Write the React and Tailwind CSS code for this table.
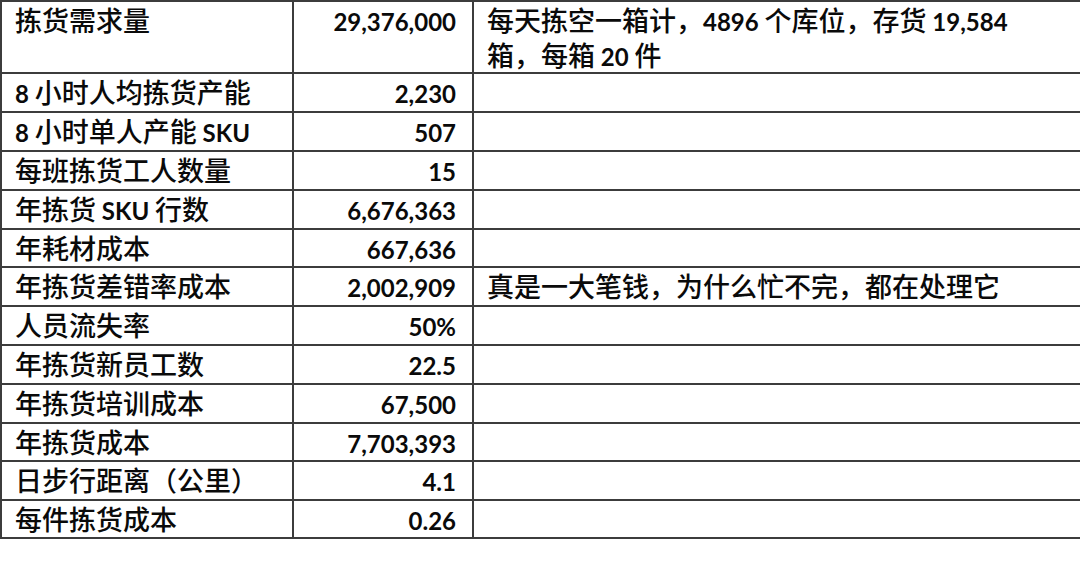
import React from "react";

const rows = [
  { a: "拣货需求量", b: "29,376,000", c: ["每天拣空一箱计，4896 个库位，存货 19,584", "箱，每箱 20 件"], h: "h-[72px]" },
  { a: "8 小时人均拣货产能", b: "2,230", h: "h-[39px]" },
  { a: "8 小时单人产能 SKU", b: "507", h: "h-[39px]" },
  { a: "每班拣货工人数量", b: "15", h: "h-[39px]" },
  { a: "年拣货 SKU 行数", b: "6,676,363", h: "h-[39px]" },
  { a: "年耗材成本", b: "667,636", h: "h-[38px]" },
  { a: "年拣货差错率成本", b: "2,002,909", c: ["真是一大笔钱，为什么忙不完，都在处理它"], h: "h-[39px]" },
  { a: "人员流失率", b: "50%", h: "h-[39px]" },
  { a: "年拣货新员工数", b: "22.5", h: "h-[39px]" },
  { a: "年拣货培训成本", b: "67,500", h: "h-[39px]" },
  { a: "年拣货成本", b: "7,703,393", h: "h-[38px]" },
  { a: "日步行距离（公里）", b: "4.1", h: "h-[39px]" },
  { a: "每件拣货成本", b: "0.26", h: "h-[38px]" },
];

function T({ s }) {
  const parts = s.split(/([\u0020-\u007e]+)/).filter((p) => p.length > 0);
  return (
    <>
      {parts.map((p, i) =>
        /^[\u0020-\u007e]+$/.test(p) ? (
          <span
            key={i}
            className="font-bold text-[24px] leading-none [font-family:Lato,'Liberation_Sans',sans-serif]"
          >
            {p}
          </span>
        ) : (
          <span key={i} className="leading-none font-medium">
            {p}
          </span>
        )
      )}
    </>
  );
}

export default function App() {
  return (
    <div className="w-[1080px] h-[577px] bg-white overflow-hidden text-[#0a0a0a] text-[27px] [font-family:'Noto_Sans_CJK_SC','Noto_Sans',sans-serif]">
      <div className="w-[1300px] border-l-2 border-t-2 border-[#3c3c3c]">
        {rows.map((r, i) => (
          <div
            key={i}
            className={`flex ${r.h} border-b-2 border-[#3c3c3c] leading-[35px]`}
          >
            <div className="w-[292px] shrink-0 border-r-2 border-[#3c3c3c] pl-[13px] whitespace-nowrap">
              <T s={r.a} />
            </div>
            <div className="w-[180px] shrink-0 border-r-2 border-[#3c3c3c] pr-[16px] text-right whitespace-nowrap">
              <T s={r.b} />
            </div>
            <div className="flex-1 pl-[13px] whitespace-nowrap">
              {r.c &&
                r.c.map((line, j) => (
                  <div key={j}>
                    <T s={line} />
                  </div>
                ))}
            </div>
          </div>
        ))}
      </div>
    </div>
  );
}
